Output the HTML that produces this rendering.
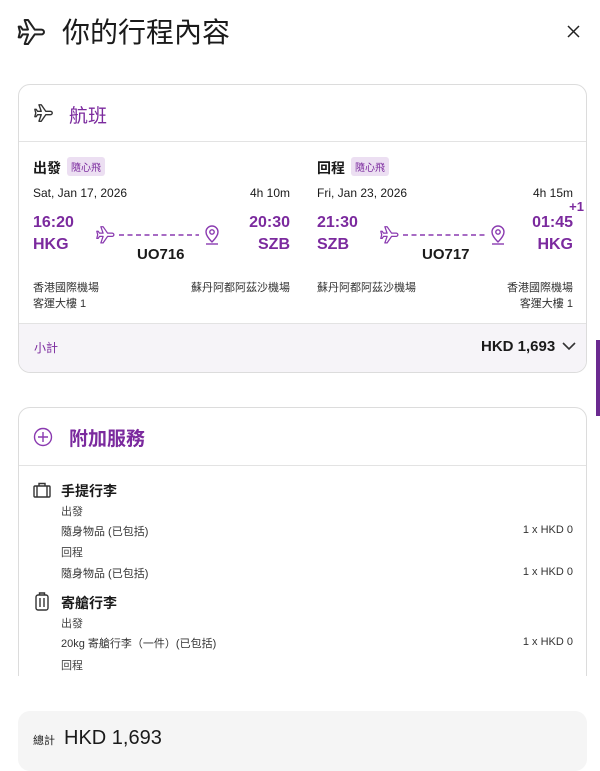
<!DOCTYPE html>
<html><head><meta charset="utf-8"><style>
*{margin:0;padding:0;box-sizing:border-box}
body{width:600px;height:760px;overflow:hidden;background:#fff;font-family:"Liberation Sans","Noto Sans CJK TC",sans-serif;color:#1a1a1a;position:relative}
.a{position:absolute;white-space:nowrap}
.p{color:#7b2a9e}
.card{position:absolute;left:18px;width:569px;border:1px solid #dcdcdc;border-radius:12px;background:#fff;overflow:hidden}
.tag{display:inline-block;background:#ecdff2;color:#7b2a9e;font-size:10px;padding:2px 4px;border-radius:3px;font-weight:normal;vertical-align:2px;margin-left:6px}
.b{font-weight:bold}
.s12{font-size:12px}.s11{font-size:11px}
.r{text-align:right}
</style></head><body>
<svg class="a" style="left:16px;top:16px" width="32" height="32" viewBox="0 0 24 24" fill="none" stroke="#222" stroke-width="1.5" stroke-linejoin="round"><path d="M21 12c0-1-1-1.8-2-1.8H14L9 3H6.5L9 10.2H5L3.5 8H2L3 12L2 16H3.5L5 13.8H9L6.5 21H9L14 13.8H19c1 0 2-.8 2-1.8z"/></svg>
<div class="a" style="left:62px;top:11px;font-size:28px">你的行程內容</div>
<svg class="a" style="left:567px;top:25px" width="13" height="13" viewBox="0 0 13 13" stroke="#222" stroke-width="1.5"><path d="M1 1L12 12M12 1L1 12"/></svg>
<div class="a" style="left:596px;top:340px;width:4px;height:76px;background:#6b2a90"></div>

<div class="card" style="top:84px;height:289px">
 <div style="position:absolute;left:0;right:0;top:56px;border-top:1px solid #e3e3e3"></div>
 <svg class="a" style="left:14px;top:17px" width="22" height="22" viewBox="0 0 24 24" fill="none" stroke="#333" stroke-width="1.5" stroke-linejoin="round"><path d="M21 12c0-1-1-1.8-2-1.8H14L9 3H6.5L9 10.2H5L3.5 8H2L3 12L2 16H3.5L5 13.8H9L6.5 21H9L14 13.8H19c1 0 2-.8 2-1.8z"/></svg>
 <div class="a p" style="left:50px;top:16px;font-size:19px">航班</div>
 <div style="position:absolute;left:0;right:0;top:238px;bottom:0;background:#f6f4f8;border-top:1px solid #e3e3e3"></div>
 <div class="a p s12" style="left:15px;top:254px">小計</div>
 <div class="a b" style="left:462px;top:253px;font-size:15px">HKD 1,693</div>
 <svg class="a" style="left:543px;top:257px" width="14" height="9" viewBox="0 0 14 9" fill="none" stroke="#333" stroke-width="1.6"><path d="M1 1L7 7L13 1"/></svg>
</div>

<!-- outbound -->
<div class="a b" style="left:33px;top:157px;font-size:14px">出發<span class="tag">隨心飛</span></div>
<div class="a s12" style="left:33px;top:186px">Sat, Jan 17, 2026</div>
<div class="a s12" style="left:230px;top:186px;width:60px;text-align:right">4h 10m</div>
<div class="a b p" style="left:33px;top:214px;font-size:16px">16:20</div>
<div class="a b p" style="left:33px;top:236px;font-size:16px">HKG</div>
<div class="a b p r" style="left:230px;top:214px;width:60px;font-size:16px">20:30</div>
<div class="a b p r" style="left:230px;top:236px;width:60px;font-size:16px">SZB</div>
<div class="a b" style="left:137px;top:246px;font-size:15px">UO716</div>
<div class="a s11" style="left:33px;top:279px;color:#333">香港國際機場<br>客運大樓 1</div>
<div class="a s11 r" style="left:150px;top:279px;width:140px;color:#333">蘇丹阿都阿茲沙機場</div>

<!-- return -->
<div class="a b" style="left:317px;top:157px;font-size:14px">回程<span class="tag">隨心飛</span></div>
<div class="a s12" style="left:317px;top:186px">Fri, Jan 23, 2026</div>
<div class="a s12 r" style="left:513px;top:186px;width:60px">4h 15m</div>
<div class="a b p r" style="left:560px;top:199px;width:24px;font-size:13px">+1</div>
<div class="a b p" style="left:317px;top:214px;font-size:16px">21:30</div>
<div class="a b p" style="left:317px;top:236px;font-size:16px">SZB</div>
<div class="a b p r" style="left:513px;top:214px;width:60px;font-size:16px">01:45</div>
<div class="a b p r" style="left:513px;top:236px;width:60px;font-size:16px">HKG</div>
<div class="a b" style="left:422px;top:246px;font-size:15px">UO717</div>
<div class="a s11" style="left:317px;top:279px;color:#333">蘇丹阿都阿茲沙機場</div>
<div class="a s11 r" style="left:453px;top:279px;width:120px;color:#333">香港國際機場<br>客運大樓 1</div>

<svg class="a" style="left:95px;top:223px" width="130" height="24" viewBox="0 0 130 24" fill="none" stroke="#8a3ab0" stroke-width="1.4" stroke-linejoin="round">
<path transform="translate(0,1) scale(0.9)" d="M21 12c0-1-1-1.8-2-1.8H14L9 3H6.5L9 10.2H5L3.5 8H2L3 12L2 16H3.5L5 13.8H9L6.5 21H9L14 13.8H19c1 0 2-.8 2-1.8z"/>
<path d="M24 12H104" stroke-dasharray="5 3.5"/>
<path d="M117 19c-4-4-6-7-6-10a6 6 0 0 1 12 0c0 3-2 6-6 10z"/><circle cx="117" cy="9" r="2.2"/><path d="M111 21h12"/>
</svg>
<svg class="a" style="left:379px;top:223px" width="130" height="24" viewBox="0 0 130 24" fill="none" stroke="#8a3ab0" stroke-width="1.4" stroke-linejoin="round">
<path transform="translate(0,1) scale(0.9)" d="M21 12c0-1-1-1.8-2-1.8H14L9 3H6.5L9 10.2H5L3.5 8H2L3 12L2 16H3.5L5 13.8H9L6.5 21H9L14 13.8H19c1 0 2-.8 2-1.8z"/>
<path d="M24 12H107" stroke-dasharray="5 3.5"/>
<path d="M119 19c-4-4-6-7-6-10a6 6 0 0 1 12 0c0 3-2 6-6 10z"/><circle cx="119" cy="9" r="2.2"/><path d="M113 21h12"/>
</svg>

<div class="card" style="top:407px;height:300px">
 <div style="position:absolute;left:0;right:0;top:57px;border-top:1px solid #e3e3e3"></div>
 <svg class="a" style="left:14px;top:19px" width="20" height="20" viewBox="0 0 20 20" fill="none" stroke="#8a3ab0" stroke-width="1.4"><circle cx="10" cy="10" r="8.5"/><path d="M10 5v10M5 10h10"/></svg>
 <div class="a b p" style="left:50px;top:16px;font-size:19px">附加服務</div>
</div>
<div class="a" style="left:0;top:676px;width:600px;height:84px;background:#fff"></div>

<svg class="a" style="left:33px;top:482px" width="18" height="16" viewBox="0 0 18 16" fill="none" stroke="#333" stroke-width="1.4"><rect x="1" y="4" width="16" height="11" rx="1"/><path d="M6 4V1.5h6V4M4 4v11M14 4v11"/></svg>
<div class="a b" style="left:61px;top:481px;font-size:14px">手提行李</div>
<div class="a s11" style="left:61px;top:503px;color:#444">出發</div>
<div class="a s11" style="left:61px;top:523px;color:#333">隨身物品 (已包括)</div>
<div class="a s11 r" style="left:473px;top:524px;width:100px;color:#333">1 x HKD 0</div>
<div class="a s11" style="left:61px;top:544px;color:#444">回程</div>
<div class="a s11" style="left:61px;top:565px;color:#333">隨身物品 (已包括)</div>
<div class="a s11 r" style="left:473px;top:566px;width:100px;color:#333">1 x HKD 0</div>
<svg class="a" style="left:35px;top:592px" width="14" height="20" viewBox="0 0 14 20" fill="none" stroke="#333" stroke-width="1.4"><rect x="1" y="3" width="12" height="15" rx="2"/><path d="M4.5 3V1h5v2M5 6v9M9 6v9"/></svg>
<div class="a b" style="left:61px;top:593px;font-size:14px">寄艙行李</div>
<div class="a s11" style="left:61px;top:615px;color:#444">出發</div>
<div class="a s11" style="left:61px;top:635px;color:#333">20kg 寄艙行李（一件）(已包括)</div>
<div class="a s11 r" style="left:473px;top:636px;width:100px;color:#333">1 x HKD 0</div>
<div class="a s11" style="left:61px;top:657px;color:#444">回程</div>

<div class="a" style="left:18px;top:711px;width:569px;height:60px;background:#f5f5f5;border-radius:12px"></div>
<div class="a s11" style="left:33px;top:732px">總計</div>
<div class="a" style="left:64px;top:727px;font-size:20px">HKD 1,693</div>
</body></html>
